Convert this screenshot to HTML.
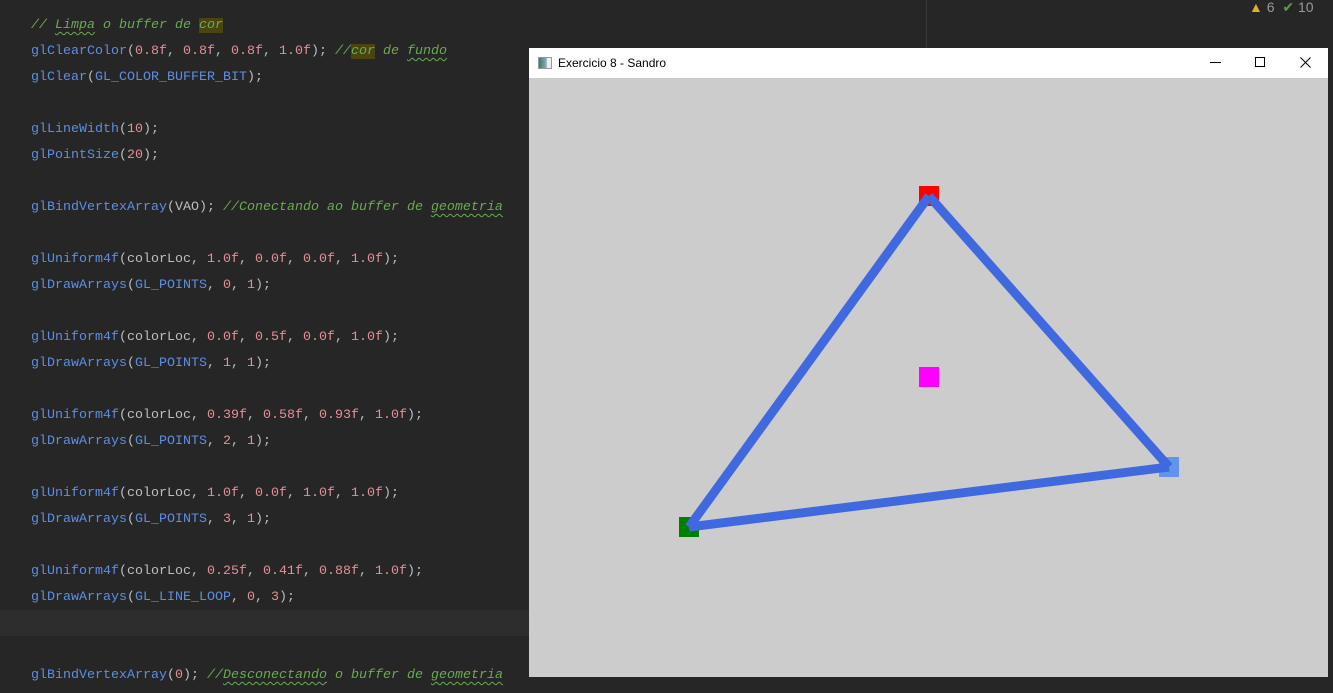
<!DOCTYPE html>
<html><head><meta charset="utf-8"><style>
body{margin:0;width:1333px;height:693px;background:#262626;overflow:hidden;position:relative;font-family:"Liberation Mono",monospace}
.l{position:absolute;left:31px;font-size:13.33px;color:#bcbec4;white-space:pre;line-height:26px;height:26px;margin-top:2px}
.f{color:#5d8ee6}.n{color:#e88e97}.c{color:#6aab50;font-style:italic}.h{background:#4a4411}
.w{text-decoration:underline wavy #6aab50;text-decoration-thickness:1px;text-underline-offset:3px}
</style></head><body>
<div style="position:absolute;left:0;top:610px;width:529px;height:26px;background:#2d2d2d"></div>
<div style="position:absolute;left:926px;top:0;width:1px;height:48px;background:#3a3a3a"></div>
<div style="position:absolute;left:1249px;top:0;font-family:'Liberation Sans',sans-serif;font-size:14px;color:#999;line-height:14px">
<span style="color:#e0b020">▲</span> 6 &nbsp;<span style="color:#5a9a4a">✔</span> 10</div>
<div class="l" style="top:11px"><span class="c">// <span class="w">Limpa</span> o buffer de <span class="h">cor</span></span></div>
<div class="l" style="top:37px"><span class="f">glClearColor</span>(<span class="n">0.8f</span>, <span class="n">0.8f</span>, <span class="n">0.8f</span>, <span class="n">1.0f</span>); <span class="c">//<span class="h">cor</span> de <span class="w">fundo</span></span></div>
<div class="l" style="top:63px"><span class="f">glClear</span>(<span class="f">GL_COLOR_BUFFER_BIT</span>);</div>
<div class="l" style="top:115px"><span class="f">glLineWidth</span>(<span class="n">10</span>);</div>
<div class="l" style="top:141px"><span class="f">glPointSize</span>(<span class="n">20</span>);</div>
<div class="l" style="top:193px"><span class="f">glBindVertexArray</span>(VAO); <span class="c">//Conectando ao buffer de <span class="w">geometria</span></span></div>
<div class="l" style="top:245px"><span class="f">glUniform4f</span>(colorLoc, <span class="n">1.0f</span>, <span class="n">0.0f</span>, <span class="n">0.0f</span>, <span class="n">1.0f</span>);</div>
<div class="l" style="top:271px"><span class="f">glDrawArrays</span>(<span class="f">GL_POINTS</span>, <span class="n">0</span>, <span class="n">1</span>);</div>
<div class="l" style="top:323px"><span class="f">glUniform4f</span>(colorLoc, <span class="n">0.0f</span>, <span class="n">0.5f</span>, <span class="n">0.0f</span>, <span class="n">1.0f</span>);</div>
<div class="l" style="top:349px"><span class="f">glDrawArrays</span>(<span class="f">GL_POINTS</span>, <span class="n">1</span>, <span class="n">1</span>);</div>
<div class="l" style="top:401px"><span class="f">glUniform4f</span>(colorLoc, <span class="n">0.39f</span>, <span class="n">0.58f</span>, <span class="n">0.93f</span>, <span class="n">1.0f</span>);</div>
<div class="l" style="top:427px"><span class="f">glDrawArrays</span>(<span class="f">GL_POINTS</span>, <span class="n">2</span>, <span class="n">1</span>);</div>
<div class="l" style="top:479px"><span class="f">glUniform4f</span>(colorLoc, <span class="n">1.0f</span>, <span class="n">0.0f</span>, <span class="n">1.0f</span>, <span class="n">1.0f</span>);</div>
<div class="l" style="top:505px"><span class="f">glDrawArrays</span>(<span class="f">GL_POINTS</span>, <span class="n">3</span>, <span class="n">1</span>);</div>
<div class="l" style="top:557px"><span class="f">glUniform4f</span>(colorLoc, <span class="n">0.25f</span>, <span class="n">0.41f</span>, <span class="n">0.88f</span>, <span class="n">1.0f</span>);</div>
<div class="l" style="top:583px"><span class="f">glDrawArrays</span>(<span class="f">GL_LINE_LOOP</span>, <span class="n">0</span>, <span class="n">3</span>);</div>
<div class="l" style="top:661px"><span class="f">glBindVertexArray</span>(<span class="n">0</span>); <span class="c">//<span class="w">Desconectando</span> o buffer de <span class="w">geometria</span></span></div>

<div style="position:absolute;left:529px;top:48px;width:799px;height:629px;background:#cccccc">
<div style="height:30px;background:#fff;position:relative;font-family:'Liberation Sans',sans-serif;font-size:12px;color:#000;line-height:30px">
<div style="position:absolute;left:9px;top:9px;width:12px;height:10px;border:1px solid #999;background:linear-gradient(90deg,#3a7a6a,#8ab 60%,#eee 70%)"></div>
<span style="position:absolute;left:29px">Exercicio 8 - Sandro</span>
<div style="position:absolute;left:681px;top:14px;width:11px;height:1px;background:#000"></div>
<div style="position:absolute;left:726px;top:9px;width:8px;height:8px;border:1px solid #000"></div>
<svg style="position:absolute;left:771px;top:9px" width="11" height="11"><path d="M0.5 0.5L10.5 10.5M10.5 0.5L0.5 10.5" stroke="#000" stroke-width="1"/></svg>
</div>
<svg style="position:absolute;left:0;top:0" width="799" height="629">
<rect x="390" y="138" width="20" height="20" fill="#f00"/>
<rect x="150" y="469" width="20" height="20" fill="#008000"/>
<rect x="630" y="409" width="20" height="20" fill="#6394ed"/>
<rect x="390" y="319" width="20" height="20" fill="#f0f"/>
<g stroke="#4069e0" stroke-width="9" stroke-linecap="butt">
<line x1="400" y1="148" x2="160" y2="479"/>
<line x1="160" y1="479" x2="640" y2="419"/>
<line x1="640" y1="419" x2="400" y2="148"/>
</g>
</svg>
</div>
</body></html>
